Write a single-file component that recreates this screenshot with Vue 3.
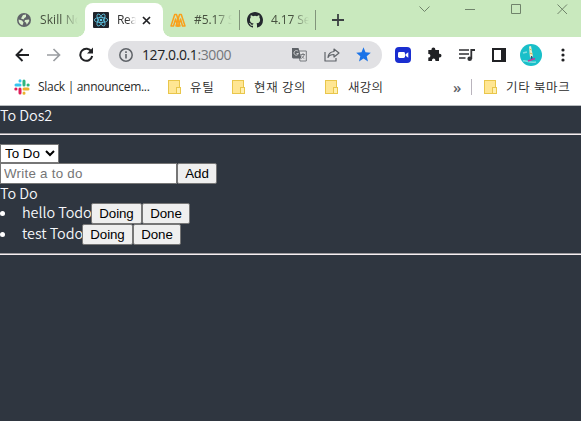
<script setup>
import { ref } from 'vue'

const category = ref('To Do')
const draft = ref('')
const todos = ['hello Todo', 'test Todo']
const bookmarks = [
  { label: '유틸', cls: 'util' },
  { label: '현재 강의', cls: 'current' },
  { label: '새강의', cls: 'fresh' },
]
</script>

<template>
  <div class="window">
    <header class="tabs">
      <div class="tab first">
        <svg width="14" height="14" viewBox="0 0 14 14"><circle cx="7" cy="7" r="7" fill="#5f6368" /><path d="M1.600 6.500 5 7.500l1.500 2-1 2.700C3 11.500 1.300 9.500 1.600 6.500ZM6 2l3-.4L9 4 7.500 5 6.500 6.500 4 5.500ZM8 7l4-.5.3 1.500-2.500 3.800L9 9.500 7.500 8.700Z" fill="#d7edcb" /></svg>
        <span class="title fade">Skill No</span>
      </div>
      <div class="tab active">
        <svg width="16" height="16" viewBox="0 0 16 16"><rect width="16" height="16" rx="1" fill="#20232a" /><g fill="none" stroke="#61c9e8" stroke-width=".8"><ellipse cx="8" cy="8" rx="6.700" ry="2.600" /><ellipse cx="8" cy="8" rx="6.700" ry="2.600" transform="rotate(60 8 8)" /><ellipse cx="8" cy="8" rx="6.700" ry="2.600" transform="rotate(120 8 8)" /></g><circle cx="8" cy="8" r="1.300" fill="#61c9e8" /></svg>
        <span class="title fade short">Rea</span>
        <svg class="close" width="9" height="9" viewBox="0 0 9 9"><path d="m1 1 7 7M8 1 1 8" stroke="#202124" stroke-width="1.700" /></svg>
      </div>
      <div class="tab third">
        <svg width="16" height="14" viewBox="0 0 16 14"><g fill="none" stroke="#f9a01b" stroke-width="1.500" stroke-linejoin="round"><path d="M1 13 4.700 1.500h1.800L10 13H7.500L5.600 6 3.500 13Z" /><path d="M6 13 9.500 1.500h1.800L15 13h-2.500l-2-7-2 7Z" /></g></svg>
        <span class="title fade">#5.17 S</span>
      </div>
      <i class="sep"></i>
      <div class="tab fourth">
        <svg width="16" height="16" viewBox="0 0 16 16"><path fill="#24292f" d="M8 0C3.580 0 0 3.580 0 8c0 3.540 2.290 6.530 5.470 7.590.4.070.55-.17.55-.38 0-.19-.01-.82-.01-1.490-2.010.37-2.530-.49-2.690-.94-.09-.23-.48-.94-.82-1.130-.28-.15-.68-.52-.01-.53.63-.01 1.080.58 1.230.82.72 1.210 1.870.87 2.330.66.070-.52.28-.87.51-1.070-1.780-.2-3.640-.89-3.640-3.950 0-.87.31-1.590.82-2.150-.08-.2-.36-1.020.08-2.120 0 0 .67-.21 2.200.82a7.600 7.600 0 0 1 4 0c1.530-1.040 2.200-.82 2.200-.82.44 1.100.16 1.920.08 2.120.51.56.82 1.270.82 2.150 0 3.070-1.870 3.750-3.650 3.950.29.25.54.73.54 1.480 0 1.070-.01 1.930-.01 2.200 0 .21.15.46.55.38A8.010 8.010 0 0 0 16 8c0-4.420-3.580-8-8-8Z" /></svg>
        <span class="title fade">4.17 Se</span>
      </div>
      <i class="sep"></i>
      <svg class="plus" width="12" height="12" viewBox="0 0 12 12"><path d="M6 0v12M0 6h12" stroke="#3c4043" stroke-width="1.800" /></svg>
      <div class="controls">
        <svg width="11" height="11" viewBox="0 0 11 11"><path d="m.5 2.500 5 5 5-5" /></svg>
        <svg width="11" height="11" viewBox="0 0 11 11"><path d="M0 5.500h10" /></svg>
        <svg width="11" height="11" viewBox="0 0 11 11"><path d="M.5.5h9v9h-9Z" /></svg>
        <svg width="11" height="11" viewBox="0 0 11 11"><path d="m.5.5 9.500 9.500m0-9.500-9.500 9.500" /></svg>
      </div>
    </header>

    <div class="toolbar">
      <svg class="back" width="14" height="14" viewBox="0 0 14 14"><path d="M14 7H1.500M7.500 1l-6 6 6 6" fill="none" stroke="#202124" stroke-width="1.900" /></svg>
      <svg class="forward" width="14" height="14" viewBox="0 0 14 14"><path d="M0 7h12.500M6.500 1l6 6-6 6" fill="none" stroke="#9a9da1" stroke-width="1.700" /></svg>
      <svg class="reload" width="15" height="15" viewBox="0 0 15 15"><path d="M12.500 4.800A6 6 0 1 0 13.200 9" fill="none" stroke="#202124" stroke-width="2" /><path d="M14 .5v6H8Z" fill="#202124" /></svg>
      <div class="address">
        <svg class="info" width="14" height="14" viewBox="0 0 14 14"><circle cx="7" cy="7" r="6.200" fill="none" stroke="#5f6368" stroke-width="1.500" /><path d="M7 6v4.500M7 3.300v1.600" stroke="#5f6368" stroke-width="1.600" /></svg>
        <span class="url">127.0.0.1<em>:3000</em></span>
        <svg class="translate" width="15" height="15" viewBox="0 0 15 15"><path d="M6.500 4h7.800v10H8Z" fill="#e4e4e6" stroke="#777a7e" /><path d="M0 1h6.500l3 10.500H1L0 10.500Z" fill="#5f6368" /><path d="M6.200 4.600A2.300 2.300 0 1 0 6.500 6.500H4.500" fill="none" stroke="#cfd0d2" /><path d="M8.500 7.500H13M11 6v1.500m1.200 0c-.3 2-1.500 3-2.700 4m0-3c.6 1.500 1.500 2.300 2.800 3" fill="none" stroke="#686b70" stroke-width=".8" /></svg>
        <svg class="share" width="16" height="14" viewBox="0 0 16 14"><path d="M1 4v9h11V10M10 1l5 4-5 4V6.500c-3 0-5 .8-6 3 .2-3.500 2.500-5.500 6-6Z" fill="none" stroke="#5f6368" stroke-width="1.200" stroke-linejoin="round" /></svg>
        <svg class="star" width="15" height="15" viewBox="0 0 15 15"><path d="m7.500.3 2 5 5.300.4-4.100 3.500 1.300 5.300-4.500-2.900L3 14.500l1.300-5.300L.2 5.700l5.300-.4Z" fill="#1a73e8" /></svg>
      </div>
      <svg class="meet" width="16" height="16" viewBox="0 0 16 16"><rect width="16" height="16" rx="4" fill="#1a2ed0" /><rect x="3" y="5" width="7" height="6" rx="1.400" fill="#fff" /><path d="m10.500 7.300 2.800-2v5.500l-2.800-2Z" fill="#fff" /></svg>
      <svg class="puzzle" width="15" height="15" viewBox="0 0 15 15"><path d="M1.300 3h3.200V2.300a1.900 1.900 0 0 1 3.800 0V3H12v3.700h.6a1.900 1.900 0 0 1 0 3.800H12V14H8.400v-.8a1.700 1.700 0 0 0-3.400 0v.8H1.300v-3.500H2A1.800 1.800 0 0 0 2 7h-.7Z" fill="#202124" /></svg>
      <svg class="music" width="16" height="14" viewBox="0 0 16 14"><path d="M0 2h10M0 6h10M0 10h6.500" stroke="#303134" stroke-width="1.600" /><circle cx="10.700" cy="10.700" r="2.300" fill="#303134" /><path d="M12.300 11V2H16" fill="none" stroke="#303134" stroke-width="1.800" /></svg>
      <svg class="panel" width="14" height="14" viewBox="0 0 14 14"><path d="M0 0h14v14H0Zm2 2v10h7V2Z" fill="#202124" fill-rule="evenodd" /></svg>
      <svg class="avatar" width="22" height="22" viewBox="0 0 22 22"><circle cx="11" cy="11" r="11" fill="#19bfc9" /><path d="M3 17c3-1 5 2 13 1M3 9l4-1" stroke="#7edfe1" stroke-width="1.500" fill="none" /><path d="M9 2.500 11 2l2 10.500-3 1Z" fill="#e9edcf" /><path d="m9.500 5 2 1M9.500 9l3 1" stroke="#d9b956" /><path d="m11.500 12 .5 4" stroke="#334079" stroke-width="1.200" /><path d="m8 17 7-2.500" stroke="#bd3c9d" stroke-width="1.500" /></svg>
      <svg class="dots" width="4" height="14" viewBox="0 0 4 14"><g fill="#202124"><circle cx="2" cy="2" r="1.600" /><circle cx="2" cy="7" r="1.600" /><circle cx="2" cy="12" r="1.600" /></g></svg>
    </div>

    <nav class="bookmarks">
      <svg class="slack" width="16" height="16" viewBox="0 0 16 16"><g fill="none" stroke-width="3" stroke-linecap="round"><path d="M6 1.800V2M2 6h4" stroke="#36c5f0" /><path d="M10 2v4m4 0h.2" stroke="#2eb67d" /><path d="M10 10h4m-4 4v.2" stroke="#ecb22e" /><path d="M6 10v4m-4-4h-.2" stroke="#e01e5a" /></g></svg>
      <span class="slack-label">Slack | announcem...</span>
      <template v-for="item in bookmarks" :key="item.label">
        <i class="folder"></i><span class="label" :class="item.cls">{{ item.label }}</span>
      </template>
      <span class="more">»</span>
      <i class="divider"></i>
      <i class="folder"></i><span class="label other">기타 북마크</span>
    </nav>

    <main class="page">
      <h2>To Dos2</h2>
      <hr />
      <select v-model="category"><option>To Do</option><option>Doing</option><option>Done</option></select>
      <form @submit.prevent>
        <input v-model="draft" placeholder="Write a to do" /><button class="add">Add</button>
      </form>
      <h3>To Do</h3>
      <ul>
        <li v-for="todo in todos" :key="todo"><i class="bullet"></i><span class="todo">{{ todo }}</span><button class="doing">Doing</button><button class="done">Done</button></li>
      </ul>
      <hr class="end" />
    </main>
  </div>
</template>

<style>
body { margin: 0; overflow: hidden; }
</style>

<style scoped>
* { box-sizing: border-box; }
svg { display: block; flex: none; }
.window { width: 581px; height: 421px; display: flex; flex-direction: column; background: #fff; font: 12px/16px "Open Sans", "Noto Sans CJK KR", sans-serif; overflow: hidden; }
.tabs { height: 37px; flex: none; display: flex; background: #c9e9be; padding-top: 3px; }
.tab { display: flex; align-items: center; height: 34px; flex: none; }
.title { width: 38px; white-space: nowrap; color: #46503f; font-size: 12px; margin-left: 8px; letter-spacing: -.1px; }
.fade { -webkit-mask-image: linear-gradient(90deg, #000 55%, transparent); mask-image: linear-gradient(90deg, #000 55%, transparent); }
.first { width: 85px; padding-left: 17px; }
.first .title { margin-left: 9px; letter-spacing: .1px; }
.active { width: 78px; background: #fff; border-radius: 8px 8px 0 0; padding-left: 8px; position: relative; }
.active::before, .active::after { content: ""; position: absolute; bottom: 0; width: 8px; height: 8px; }
.active::before { left: -8px; background: radial-gradient(circle at 0 0, transparent 7.5px, #fff 8px); }
.active::after { right: -8px; background: radial-gradient(circle at 100% 0, transparent 7.5px, #fff 8px); }
.title.short { width: 19px; color: #333; letter-spacing: -.3px; }
.close { margin-left: 6px; }
.third { padding-left: 7px; width: 76px; }
.fourth { padding-left: 7px; width: 75px; }
.sep { width: 1px; height: 20px; margin-top: 7px; background: #81947b; flex: none; }
.plus { margin: 11px 0 0 16px; }
.controls { display: flex; gap: 35px; margin: 1px 0 0 75px; }
.controls path { fill: none; stroke: #70836b; stroke-width: 1; }
.toolbar { height: 35px; flex: none; display: flex; align-items: center; padding-left: 15px; }
.forward { margin-left: 18px; }
.reload { margin-left: 18px; }
.address { width: 274px; height: 28px; margin-left: 14px; border-radius: 14px; background: #e1e1e4; display: flex; align-items: center; padding-left: 11px; flex: none; }
.url { width: 150px; margin-left: 9px; font-size: 14px; letter-spacing: -.4px; color: #202124; }
.url em { font-style: normal; color: #74777b; }
.share { margin-left: 17px; }
.star { margin-left: 16px; }
.meet { margin-left: 13px; }
.puzzle { margin-left: 16px; }
.music { margin-left: 17px; }
.panel { margin-left: 17px; }
.avatar { margin-left: 14px; }
.dots { margin-left: 19px; }
.bookmarks { height: 34px; flex: none; display: flex; align-items: center; padding: 0 0 4px 14px; border-bottom: 1px solid #b8bcbf; white-space: nowrap; color: #292929; }
.slack-label { margin-left: 8px; width: 130px; font-size: 12px; letter-spacing: -.3px; flex: none; }
.folder { width: 12px; height: 14px; flex: none; background: #ffe693; border: 1px solid #e9c64b; position: relative; }
.folder::after { content: ""; position: absolute; right: -2px; bottom: -1px; width: 3px; height: 5px; border: 1px solid #e9c64b; background: #fff0af; }
.label { margin-left: 10px; flex: none; font-family: "Noto Sans CJK KR", sans-serif; font-size: 12.5px; font-weight: 350; letter-spacing: .7px; }
.util { width: 42px; }
.current { width: 71px; }
.fresh { width: 105px; letter-spacing: .3px; margin-left: 11px; }
.more { width: 18px; font-size: 15px; font-weight: 600; color: #5f6368; flex: none; }
.divider { width: 1px; height: 16px; background: #b9b4bd; margin-right: 12px; flex: none; }
.page { flex: 1; background: #2f3640; color: #f5f6fa; font-family: "Noto Sans CJK KR", sans-serif; font-size: 14.4px; font-weight: 350; line-height: 20px; letter-spacing: -.05px; }
h2, h3 { margin: 0; font-size: 14.4px; font-weight: 350; height: 20px; line-height: 17px; }
h3 { height: 19px; }
hr { margin: 7px 0 9px; border: 0; height: 2px; border-top: 1px solid #9a999c; background: #f7eff2; }
select { display: block; width: 59px; height: 19px; margin: 0; padding: 0; border: 1px solid #767676; border-radius: 0; background: #fff; font: 13.333px "Liberation Sans", sans-serif; color: #000; }
form { display: flex; height: 21px; }
input { width: 177px; height: 21px; border: 1px solid #767676; background: #fff; padding: 1px 3px; margin: 0; font: 13.333px "Liberation Sans", sans-serif; letter-spacing: .25px; }
input::placeholder { color: #757575; }
button { height: 21px; padding: 0; margin: 0; border: 1px solid #767676; border-radius: 2px; background: #efefef; color: #000; font: 13.333px "Liberation Sans", sans-serif; letter-spacing: -.1px; flex: none; }
.add { width: 40px; }
ul { margin: 0; padding: 0; list-style: none; }
li { display: flex; height: 21px; align-items: center; }
.todo { width: 69px; height: 21px; line-height: 18px; white-space: nowrap; }
li:nth-child(2) .todo { width: 60px; }
.bullet { width: 5px; height: 5px; border-radius: 50%; background: #fff; margin-right: 17px; flex: none; }
.doing { width: 51px; }
.done { width: 48px; }
.end { margin-top: 8px; }
</style>
